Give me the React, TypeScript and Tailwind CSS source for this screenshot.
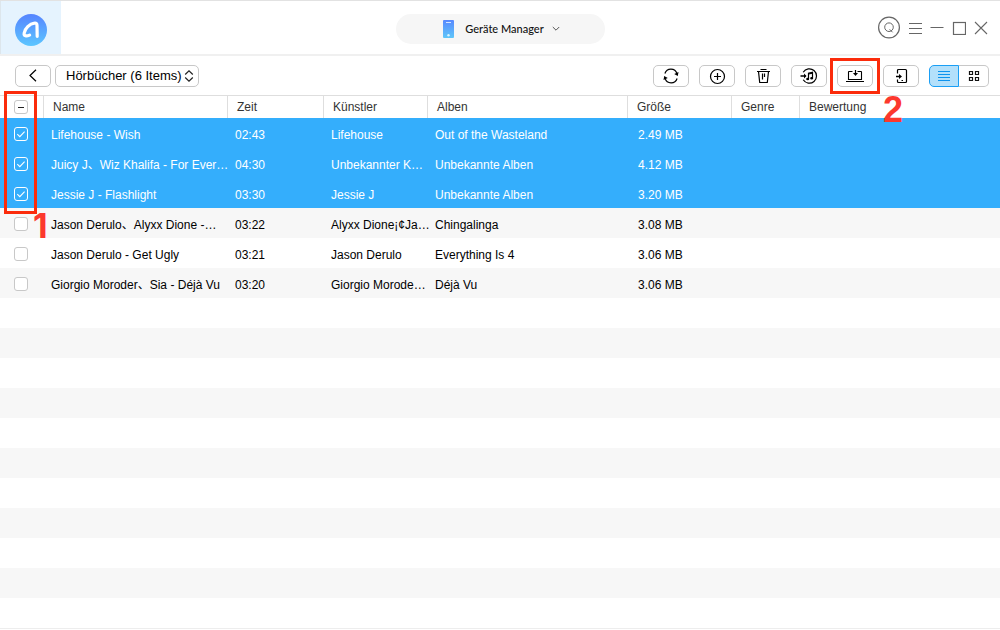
import { useState, type ReactNode } from 'react'
import clsx from 'clsx'

interface Track {
  name: string
  time: string
  artist: string
  album: string
  size: string
}

const tracks: Track[] = [
  { name: 'Lifehouse - Wish', time: '02:43', artist: 'Lifehouse', album: 'Out of the Wasteland', size: '2.49 MB' },
  { name: 'Juicy J、Wiz Khalifa - For Ever…', time: '04:30', artist: 'Unbekannter K…', album: 'Unbekannte Alben', size: '4.12 MB' },
  { name: 'Jessie J - Flashlight', time: '03:30', artist: 'Jessie J', album: 'Unbekannte Alben', size: '3.20 MB' },
  { name: 'Jason Derulo、Alyxx Dione -…', time: '03:22', artist: 'Alyxx Dione¡¢Ja…', album: 'Chingalinga', size: '3.08 MB' },
  { name: 'Jason Derulo - Get Ugly', time: '03:21', artist: 'Jason Derulo', album: 'Everything Is 4', size: '3.06 MB' },
  { name: 'Giorgio Moroder、Sia - Déjà Vu', time: '03:20', artist: 'Giorgio Morode…', album: 'Déjà Vu', size: '3.06 MB' },
]

const EMPTY_ROWS = 11

const headers = ['Name', 'Zeit', 'Künstler', 'Alben', 'Größe', 'Genre', 'Bewertung']

function ToolButton({ label, children }: { label: string; children: ReactNode }) {
  return (
    <button
      type="button"
      aria-label={label}
      className="flex h-[22px] w-9 items-center justify-center rounded-[5px] border border-[#c8c8c8] bg-white text-black"
    >
      {children}
    </button>
  )
}

function Icon({ children }: { children: ReactNode }) {
  return (
    <svg width="20" height="18" viewBox="0 0 20 18" fill="none" stroke="currentColor" strokeWidth="1.2">
      {children}
    </svg>
  )
}

function Checkbox({ label, checked, mixed, onChange }: { label: string; checked: boolean; mixed?: boolean; onChange: () => void }) {
  return (
    <span className="grid w-[14px]">
      <input
        type="checkbox"
        aria-label={label}
        checked={checked}
        onChange={onChange}
        className={clsx(
          'col-start-1 row-start-1 size-[14px] appearance-none rounded-[3px] border',
          checked && !mixed ? 'border-white bg-transparent' : 'border-[#c8c8c8] bg-white',
        )}
      />
      <svg className="pointer-events-none col-start-1 row-start-1" width="14" height="14" viewBox="0 0 14 14" fill="none">
        {mixed ? (
          <path d="M4 7.5h6" stroke="#222" />
        ) : (
          checked && <path d="M3.3 7.2l2.5 2.4 4.8-5" stroke="#fff" strokeWidth="1.1" />
        )}
      </svg>
    </span>
  )
}

function TitleBar() {
  return (
    <header className="flex h-[56px] items-stretch justify-between border-t border-b-2 border-t-[#e2e2e2] border-b-[#f0f0f0]">
      <div className="flex flex-1">
        <div className="flex w-[61px] items-center justify-center border-l border-[#dde6ec] bg-[#e5f3fe]">
          <svg className="mt-1" width="32" height="32" viewBox="0 0 32 32" role="img" aria-label="AnyTrans">
            <defs>
              <linearGradient id="logo" x1="0" y1="0" x2="0" y2="1">
                <stop offset="0" stopColor="#5684ff" />
                <stop offset="1" stopColor="#5cc6ff" />
              </linearGradient>
            </defs>
            <circle cx="16" cy="16" r="16" fill="url(#logo)" />
            <path
              d="M14.6 21.1C11.4 22.5 8.6 22.2 9.2 19C9.9 14.8 14.5 9.6 19.5 9.2C21.4 9 22 9.8 22 11.6L22.2 22.3"
              fill="none"
              stroke="#fff"
              strokeWidth="3.2"
              strokeLinecap="round"
              strokeLinejoin="round"
            />
          </svg>
        </div>
      </div>
      <button
        type="button"
        className="mt-[13px] flex h-[30px] w-[209px] items-center justify-center rounded-full bg-[#f6f6f6] pl-[3px] font-['Lato',sans-serif] text-[11px] font-medium text-[#111]"
      >
        <svg className="mr-[11px]" width="11" height="18" viewBox="0 0 11 18">
          <defs>
            <linearGradient id="phone" x1="0" y1="0" x2="0" y2="1">
              <stop offset="0" stopColor="#5889ff" />
              <stop offset="1" stopColor="#5fc6f9" />
            </linearGradient>
          </defs>
          <rect width="11" height="18" rx="1" fill="url(#phone)" />
          <path d="M3 2.5h5" stroke="#d5e5ff" />
          <circle cx="5.5" cy="15.3" r="1.2" fill="#d6f4ff" />
        </svg>
        Geräte Manager
        <svg className="ml-2" width="8" height="6" viewBox="0 0 8 6" fill="none" stroke="#555">
          <path d="M.8 1l3.2 3.2L7.2 1" />
        </svg>
      </button>
      <div className="flex flex-1 justify-end">
        <div className="flex items-center gap-2 pr-3 text-[#666]">
          <button type="button" aria-label="Suche">
            <svg width="24" height="24" viewBox="0 0 24 24" fill="none" stroke="currentColor">
              <circle cx="13" cy="11.5" r="10.4" strokeWidth="1.2" />
              <circle cx="13" cy="11.2" r="4.3" />
              <path d="M13.6 13.3l3 3" />
            </svg>
          </button>
          <button type="button" aria-label="Menü">
            <svg width="14" height="14" viewBox="0 0 14 14" stroke="currentColor">
              <path d="M1 2.5h13M1 7.5h13M1 12.5h13" />
            </svg>
          </button>
          <button type="button" aria-label="Minimieren">
            <svg width="14" height="14" viewBox="0 0 14 14" stroke="currentColor">
              <path d="M.5 6.5h13" />
            </svg>
          </button>
          <button type="button" aria-label="Maximieren">
            <svg width="14" height="14" viewBox="0 0 14 14" fill="none" stroke="currentColor">
              <rect x="1.5" y="1.5" width="12" height="12" strokeWidth="1.2" />
            </svg>
          </button>
          <button type="button" aria-label="Schließen">
            <svg width="14" height="14" viewBox="0 0 14 14" stroke="currentColor">
              <path d="M1 1l12 12M13 1L1 13" strokeWidth="1.1" />
            </svg>
          </button>
        </div>
      </div>
    </header>
  )
}

function Toolbar() {
  return (
    <div className="flex h-[39px] items-center gap-1 pr-[11px] pl-[15px]">
      <ToolButton label="Zurück">
        <svg width="8" height="13" viewBox="0 0 8 13" fill="none" stroke="currentColor" strokeWidth="1.2">
          <path d="M7 .7L1 6.5l6 5.8" />
        </svg>
      </ToolButton>
      <div className="grid w-36 items-center">
        <select
          aria-label="Kategorie"
          className="col-start-1 row-start-1 h-[22px] w-full appearance-none rounded-[5px] border border-[#c8c8c8] bg-white pl-[10px] text-[13px] leading-5 text-black"
        >
          <option>Hörbücher (6 Items)</option>
        </select>
        <svg
          className="pointer-events-none col-start-1 row-start-1 mr-[5px] justify-self-end"
          width="10"
          height="12"
          viewBox="0 0 10 12"
          fill="none"
          stroke="#222"
          strokeWidth="1.2"
        >
          <path d="M1.2 4.5L5 .9l3.8 3.6M1.2 7.5L5 11.1l3.8-3.6" />
        </svg>
      </div>

      <div className="ml-auto flex items-center gap-[10px]">
        <ToolButton label="Aktualisieren">
          <Icon>
            <path d="M3.9 6.5A6.3 6.3 0 0 1 15.9 6.7M16.1 11.5A6.3 6.3 0 0 1 4.1 11.3" />
            <path d="M17.5 5l-.7 4-3.6-1.9zM2.5 13l.7-4 3.6 1.9z" fill="currentColor" stroke="none" />
          </Icon>
        </ToolButton>
        <ToolButton label="Hinzufügen">
          <Icon>
            <circle cx="10.5" cy="9.5" r="7" />
            <path d="M10.5 6v7M7 9.5h7" />
          </Icon>
        </ToolButton>
        <ToolButton label="Löschen">
          <Icon>
            <path d="M4 4.5h13M7.5 2.5h6M5.500 4.5l1.200 11h7.600l1.200-11M9.500 6.500v6M11.500 6.500v3.500" />
          </Icon>
        </ToolButton>
        <ToolButton label="Zu iTunes">
          <Icon>
            <path d="M4.2 5.2A7.2 7.2 0 1 1 4.2 12.8" />
            <path d="M1.5 9h5" strokeWidth="1.5" />
            <path d="M5 6.5L7.500 9l-2.500 2.500z" fill="currentColor" stroke="none" />
            <path d="M9.5 12V6.2l4-.9v6" />
            <path d="M9.5 7l4-.9" />
            <ellipse cx="8.700" cy="12" rx=".9" ry=".7" fill="currentColor" />
            <ellipse cx="12.700" cy="11.3" rx=".9" ry=".7" fill="currentColor" />
          </Icon>
        </ToolButton>
        <div className="relative z-10">
          <ToolButton label="Zum Computer">
            <Icon>
              <path d="M7.5 4.500H4a.5 .5 0 0 0-.5 .5v7.500h13V5a.5 .5 0 0 0-.5-.5h-3.5M1 14.500h18" strokeWidth="1.1" />
              <path d="M10.500 3v4" />
              <path d="M8 6h5l-2.500 3z" fill="currentColor" stroke="none" />
            </Icon>
          </ToolButton>
          <div className="pointer-events-none absolute -inset-x-[7px] -inset-y-[7px] border-3 border-[#fb2b0b]" />
          <span className="absolute top-[27px] left-[46px] text-[36px] leading-9 font-bold text-[#fc382d]">2</span>
        </div>
        <ToolButton label="Zum Gerät">
          <Icon>
            <path d="M6.5 6.500V3.5a1 1 0 0 1 1-1h7a1 1 0 0 1 1 1v11a1 1 0 0 1-1 1h-7a1 1 0 0 1-1-1V12.500" />
            <path d="M5 9.500h4" strokeWidth="1.5" />
            <path d="M8 7l3 2.500L8 12z" fill="currentColor" stroke="none" />
            <path d="M10.500 13.500h1.500" />
          </Icon>
        </ToolButton>
        <div className="flex">
          <button
            type="button"
            aria-label="Liste"
            aria-pressed="true"
            className="flex h-[22px] w-[30px] items-center justify-center rounded-l-[5px] border border-[#1a9ff5] bg-[#b3e0fb]"
          >
            <svg width="12" height="12" viewBox="0 0 12 12" stroke="#0d93ee">
              <path d="M0 1.500h12M0 4.500h12M0 7.500h12M0 10.500h12" />
            </svg>
          </button>
          <button
            type="button"
            aria-label="Raster"
            className="flex h-[22px] w-[30px] items-center justify-center rounded-r-[5px] border border-l-0 border-[#c8c8c8] bg-white"
          >
            <svg width="12" height="12" viewBox="0 0 12 12" fill="none" stroke="#111" strokeWidth="1.2">
              <path d="M1.500 1.500h3v3h-3zM7.500 1.500h3v3h-3zM1.500 7.500h3v3h-3zM7.500 7.500h3v3h-3z" />
            </svg>
          </button>
        </div>
      </div>
    </div>
  )
}

export default function App() {
  const [selected, setSelected] = useState<number[]>([0, 1, 2])

  const toggle = (i: number) =>
    setSelected((prev) => (prev.includes(i) ? prev.filter((n) => n !== i) : [...prev, i]))

  const all = selected.length === tracks.length
  const some = selected.length > 0 && !all

  return (
    <div className="min-h-screen bg-white font-['Liberation_Sans','Noto_Sans_CJK_SC',sans-serif] text-black">
      <TitleBar />
      <Toolbar />
      <main className="relative">
        <table className="w-full table-fixed border-separate border-spacing-0 text-left">
          <colgroup>
            <col className="w-11" />
            <col className="w-[184px]" />
            <col className="w-24" />
            <col className="w-[104px]" />
            <col className="w-[200px]" />
            <col className="w-[104px]" />
            <col className="w-[68px]" />
            <col />
          </colgroup>
          <thead>
            <tr className="h-[23px] text-[12px] leading-4 text-[#333] shadow-[inset_0_1px_#dedede]">
              <th className="border-r border-[#dedede] p-0 pl-[14px]">
                <Checkbox
                  label="Alle auswählen"
                  checked={all}
                  mixed={some}
                  onChange={() => setSelected(all ? [] : tracks.map((_, i) => i))}
                />
              </th>
              {headers.map((h) => (
                <th key={h} className="border-r border-[#dedede] p-0 pl-[9px] font-normal last:border-r-0">
                  {h}
                </th>
              ))}
            </tr>
          </thead>
          <tbody>
            {tracks.map((t, i) => {
              const active = selected.includes(i)
              return (
                <tr
                  key={t.name}
                  className={clsx(
                    'h-[30px] text-[12px] leading-4 whitespace-nowrap',
                    active ? 'bg-[#34aefc] text-white' : 'odd:bg-white even:bg-[#f7f7f7]',
                  )}
                >
                  <td className="p-0 pt-[2px] pl-[14px]">
                    <Checkbox label={t.name} checked={active} onChange={() => toggle(i)} />
                  </td>
                  <td className="p-0 pt-1 pl-[7px]">{t.name}</td>
                  <td className="p-0 pt-1 pl-[7px]">{t.time}</td>
                  <td className="p-0 pt-1 pl-[7px]">{t.artist}</td>
                  <td className="p-0 pt-1 pl-[7px]">{t.album}</td>
                  <td className="p-0 pt-1 pl-[10px]">{t.size}</td>
                  <td />
                  <td />
                </tr>
              )
            })}
            {Array.from({ length: EMPTY_ROWS }, (_, i) => (
              <tr key={i} className="h-[30px] odd:bg-white even:bg-[#f7f7f7]">
                <td colSpan={8} />
              </tr>
            ))}
          </tbody>
        </table>
        <div className="pointer-events-none absolute -top-1 left-1 h-[123px] w-[33px] border-3 border-[#fb2b0b]" />
        <span className="absolute top-[113px] left-[33px] font-['Inter',sans-serif] text-[34px] leading-9 font-bold text-[#fc382d]">1</span>
      </main>
      <div className="border-t border-[#ededed]" />
    </div>
  )
}
